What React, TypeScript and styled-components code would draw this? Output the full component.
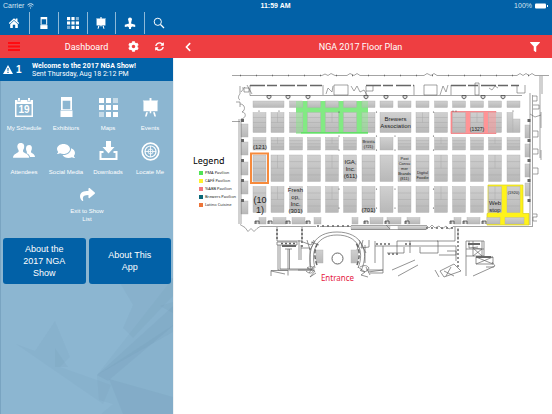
import React from "react";
import styled, { createGlobalStyle } from "styled-components";
import { FaChevronLeft, FaCog, FaComments, FaFilter, FaShare, FaSyncAlt } from "react-icons/fa";

const blue = "#0261a7";
const red = "#ee3e41";

const GlobalStyle = createGlobalStyle`
  * { box-sizing: border-box; }
  body { margin: 0; background: #fff; font-family: "Liberation Sans", Arial, sans-serif; }
  button { font: inherit; color: inherit; border: 0; padding: 0; background: none; cursor: pointer; }
  svg { display: block; }
`;

const Page = styled.div`
  min-height: 100vh;
  display: flex;
  flex-direction: column;
`;
const TopBar = styled.header`
  background: ${blue};
  color: #fff;
  padding-bottom: 1px;
`;
const Status = styled.div`
  display: grid;
  grid-template-columns: 1fr auto 1fr;
  height: 12px;
  padding: 0 4px 0 3px;
  align-items: center;
  font-size: 7px;
  line-height: 12px;
`;
const StatusSide = styled.div<{ $end?: boolean }>`
  display: flex;
  align-items: center;
  gap: 3px;
  color: #d5e5f1;
  justify-content: ${(p) => (p.$end ? "flex-end" : "flex-start")};
`;
const Clock = styled.time`
  font-weight: bold;
`;
const QuickNav = styled.nav`
  display: grid;
  grid-template-columns: repeat(6, 1fr);
  width: 173px;
  height: 22px;
`;
const QuickButton = styled.button`
  display: grid;
  place-items: center;
  & + & { border-left: 1px solid #8db9d8; }
`;
const Columns = styled.div`
  flex: 1;
  display: grid;
  grid-template-columns: 173px 1fr;
`;
const Sidebar = styled.aside`
  display: flex;
  flex-direction: column;
  background: #8cb6d1;
  border-left: 1px solid #79a4c1;
  color: #fff;
`;
const SideHeader = styled.div`
  display: grid;
  grid-template-columns: 28px 1fr 26px 27px;
  height: 23px;
  align-items: center;
  background: ${red};
  margin-left: -1px;
`;
const Title = styled.h1`
  margin: 0;
  font-family: Roboto, sans-serif;
  font-size: 9px;
  font-weight: normal;
  line-height: 12px;
  text-align: center;
`;
const SideTitle = styled(Title)`
  padding-left: 25px;
`;
const IconButton = styled.button`
  display: grid;
  place-items: center;
  height: 23px;
`;
const Alert = styled.section`
  display: flex;
  align-items: center;
  height: 23px;
  background: ${blue};
  margin-left: -1px;
  padding-left: 3px;
`;
const AlertCount = styled.div`
  display: flex;
  align-items: center;
  gap: 3px;
  width: 29px;
  font-size: 10px;
  font-weight: bold;
`;
const AlertText = styled.p`
  margin: 0;
  font-family: Roboto, sans-serif;
  font-size: 7px;
  line-height: 8px;
`;
const SideBody = styled.div`
  position: relative;
  flex: 1;
  padding: 10px 2px;
`;
const Facets = styled.svg`
  position: absolute;
  inset: auto 0 0 0;
  width: 100%;
  height: auto;
`;
const Tiles = styled.div`
  position: relative;
  display: grid;
  grid-template-columns: repeat(4, 1fr);
`;
const Tile = styled.button<{ $wide?: boolean }>`
  display: flex;
  flex-direction: column;
  align-items: center;
  justify-content: flex-start;
  height: 44px;
  padding-top: 4px;
  gap: ${(p) => (p.$wide ? "2px" : "5px")};
  grid-column: ${(p) => (p.$wide ? "1 / -1" : "auto")};
  font-size: 6px;
  line-height: 8px;
`;
const TileIcon = styled.span`
  display: grid;
  place-items: center;
  height: 24px;
`;
const TileLabel = styled.span`
  max-width: 42px;
`;
const Actions = styled.div`
  position: relative;
  display: grid;
  grid-template-columns: 1fr 1fr;
  gap: 3px;
  margin-top: 15px;
`;
const Action = styled.button`
  min-height: 46px;
  padding: 0 18px;
  border-radius: 3px;
  background: ${blue};
  font-size: 9px;
  line-height: 12px;
`;
const Main = styled.main`
  background: #fff;
  border-left: 1px solid #eef2f4;
`;
const MainHeader = styled.div`
  display: grid;
  grid-template-columns: 30px 1fr 34px;
  height: 23px;
  align-items: center;
  background: ${red};
  color: #fff;
  margin-left: -1px;
`;
const Plan = styled.div`
  display: grid;
  grid-template-columns: 58px 1fr;
  padding-top: 8px;
  font-family: "Noto Sans", sans-serif;
`;
const Legend = styled.section`
  padding: 88px 0 0 19px;
`;
const LegendTitle = styled.h2`
  margin: 0 0 1px;
  font-size: 9px;
  line-height: 14px;
  font-weight: normal;
  color: #000;
`;
const LegendList = styled.ul`
  margin: 0;
  padding: 0 0 0 6px;
  list-style: none;
`;
const LegendItem = styled.li<{ $color: string }>`
  display: flex;
  align-items: center;
  gap: 2px;
  height: 8px;
  font-size: 4px;
  line-height: 8px;
  white-space: nowrap;
  color: #222;
  &::before {
    content: "";
    flex: none;
    width: 4px;
    height: 4px;
    background: ${(p) => p.$color};
  }
`;
const Map = styled.svg`
  width: 100%;
  height: auto;
`;

const Home = () => (
  <svg width="12" height="12" viewBox="0 0 12 12" fill="#fff">
    <path d="M.8 6.100 6 1.200l1.800 1.600V1.500h1.700v2.900l1.700 1.700-.8.900L6 2.900 1.600 7z" />
    <path d="M2.200 7.200 6 3.800l3.800 3.400V11H7.200V7.800H4.800V11H2.200z" />
  </svg>
);
const Booth = ({ h }: { h: number }) => (
  <svg height={h} width={h * 0.65} viewBox="0 0 13 20" fill="#fff">
    <path fillRule="evenodd" d="M1 0h11v13H1zM2.700 3.800h7.600v8.400H2.700z" />
    <path d="M.5 13.500h12V20H.5z" />
  </svg>
);
const Dots = ({ s }: { s: number }) => (
  <svg width={s} height={s} viewBox="0 0 19 19" fill="#fff">
    {[0, 1, 2].map((r) =>
      [0, 1, 2].map((c) => {
        const faded = (r === 0 && c === 2) || (r === 2 && c === 0);
        return <rect key={`${r}${c}`} x={c * 7} y={r * 7} width="5" height="5" opacity={faded ? 0.5 : 1} />;
      })
    )}
  </svg>
);
const Easel = ({ s }: { s: number }) => (
  <svg width={s} height={s} viewBox="0 0 18 20" fill="#fff">
    <path d="M8 0h2v2.500h7v1h-.6V14H1.600V3.500H1v-1h7zM4.400 15h1.900l-1.400 4.600H3.200zM11.700 15h1.900l1.200 4.600h-1.700zM8.200 14h1.600v2H8.200z" />
  </svg>
);
const Speaker = () => (
  <svg width="12" height="13" viewBox="0 0 12 13" fill="#fff">
    <circle cx="6" cy="2.500" r="2" />
    <path d="M4.500 4h3l-.5 2.500 4.200 1.300V10l-3-.4-1.200 1V12H5v-1.400l-1.200-1-3 .4V7.800L5 6.500z" />
  </svg>
);
const Search = () => (
  <svg width="12" height="12" viewBox="0 0 12 12" fill="none" stroke="#fff">
    <circle cx="4.800" cy="4.800" r="3.600" />
    <path d="m7.500 7.500 3.500 3.500" strokeWidth="1.300" />
  </svg>
);
const Calendar = () => (
  <svg width="18" height="20" viewBox="0 0 18 20">
    <path fill="#fff" d="M0 3h3V1h2v2h8V1h2v2h3v17H0z" />
    <path fill="#8cb6d1" d="M1.500 7h15v11.500h-15z" />
    <path fill="none" stroke="#8cb6d1" strokeWidth=".6" d="M2.600 2.200v2.200h2.800V2.200M12.600 2.200v2.200h2.800V2.200" />
    <text x="9" y="16.400" textAnchor="middle" fontFamily="Liberation Sans" fontWeight="bold" fontSize="10" fill="#fff">19</text>
  </svg>
);
const People = () => (
  <svg width="22" height="16" viewBox="0 0 22 16" fill="#fff">
    <path d="M16 2c2.500 0 3.200 2 2.800 4-.2 1.300-.9 2-.8 3 .3 1.500 3.800 1.500 4 5h-5c-.3-2.200-1.800-3-3.700-3.800 1.200-.8 .6-1.300 0-2.700C12.600 5 13.300 2 16 2z" />
    <path d="M7.800 0c3 0 3.800 2.300 3.300 4.800-.3 1.500-1.200 2-1.100 3.500.2 2.200 6 2 6.200 6.500H0c.2-4.500 5.400-4.300 5.700-6.500.1-1.500-.9-2-1.200-3.500C4 2.300 4.900 0 7.800 0z" />
  </svg>
);
const Download = () => (
  <svg width="19" height="20" viewBox="0 0 19 20" fill="#fff">
    <path d="M7 0h5v6h3.500l-6 6.500-6-6.500H7z" />
    <path d="M.5 10h4v2h-2v5h14v-5h-2v-2h4v9H.5z" />
  </svg>
);
const Target = () => (
  <svg width="19" height="19" viewBox="0 0 19 19" fill="none" stroke="#fff">
    <circle cx="9.500" cy="9.500" r="8.300" strokeWidth="1.700" />
    <circle cx="9.500" cy="9.500" r="5.500" strokeWidth="1.200" />
    <circle cx="9.500" cy="9.500" r="2.500" strokeWidth=".8" />
    <path d="M9.500 4v11M4 9.500h11" strokeWidth=".8" />
  </svg>
);

const quick = [
  ["Home", <Home />],
  ["Exhibitors", <Booth h={12} />],
  ["Maps", <Dots s={12} />],
  ["Events", <Easel s={12} />],
  ["Speakers", <Speaker />],
  ["Search", <Search />],
] as const;

const tiles = [
  ["My Schedule", <Calendar />],
  ["Exhibitors", <Booth h={20} />],
  ["Maps", <Dots s={19} />],
  ["Events", <Easel s={19} />],
  ["Attendees", <People />],
  ["Social Media", <FaComments size={18} />],
  ["Downloads", <Download />],
  ["Locate Me", <Target />],
] as const;

const legend = [
  ["#50e356", "PMA Pavilion"],
  ["#fff22b", "CAFÉ Pavilion"],
  ["#f2767c", "%ABB Pavilion"],
  ["#0a6878", "Brewers Pavilion"],
  ["#ed7438", "Latino Cuisine"],
];

type Box = [number, number, number, number];
const column = (i: number) => Math.round((253 + 18.130 * i) * 2) / 2;
const booths: Box[] = [
  [253, 101, 31, 6.500],
  ...Array.from({ length: 13 }, (_, i): Box => [column(i + 2), 101, 13, 6.500]),
  ...Array.from({ length: 15 }, (_, i) => i)
    .filter((i) => i !== 7 && i !== 8 && i !== 14)
    .map((i): Box => [column(i), 112.500, 13, 20]),
  [380, 112.500, 31, 20],
  [507, 112.500, 6, 20], [513, 119, 7, 13.500],
  ...Array.from({ length: 15 }, (_, i): Box => [column(i), 137.500, 13, 12.500]),
  ...Array.from({ length: 15 }, (_, i): Box => [column(i), 155, 13, 26.500]),
  ...Array.from({ length: 15 }, (_, i): Box => [column(i), 186.500, 13, 26]),
  ...[[259, 7], [273, 13], [292, 13], [314, 7], [352, 6], [370, 13], [387, 14], [407, 13], [454, 7], [467, 13], [487, 13], [505, 19]]
    .map(([x, w]): Box => [x, 217.500, w, 6.500]),
  [351, 226.500, 39, 3], [398, 226.500, 29, 3],
  ...[124, 142, 162, 181, 201].map((y): Box => [241, y, 7, 13]),
  ...[125, 144, 164, 183].map((y): Box => [525, y, 5, 13]),
  [316, 250, 7, 13], [351, 250, 7, 13],
];
const plain = new Set([380]);

const labels: [number, number, number, string[]][] = [
  [260, 149, 6, ["(121)"]],
  [395.500, 121, 6, ["Brewers", "Association"]],
  [368.500, 143, 4, ["Brixsta", "(721)"]],
  [350.500, 164, 6, ["IGA,", "Inc.", "(611)"]],
  [404.500, 160, 4, ["Post", "Consu", "mer", "Brands", "(811)"]],
  [422.500, 174, 4, ["Digital", "Foodie"]],
  [477, 131, 5, ["(1327)"]],
  [260, 203, 9, ["(10", "1)"]],
  [295.500, 192, 6, ["Fresh", "op,", "Inc.", "(301)"]],
  [368.500, 212, 6, ["(701)"]],
  [495, 205, 6, ["Web", "stop"]],
  [513.500, 194, 4, ["(1920)"]],
];
const lineStep: Record<number, number> = { 4: 5, 5: 6, 6: 7, 9: 10 };

const FloorMap = () => (
  <Map viewBox="232 66 320 224" role="img" aria-label="Floor plan">
    <defs>
      <linearGradient id="booth" x2="0" y2="1">
        <stop stopColor="#d0d0d0" />
        <stop offset="1" stopColor="#b8b8b8" />
      </linearGradient>
    </defs>
    <path fill="#82ea83" d="M296 101h72v32.500h-72z" />
    <path fill="#ff9496" stroke="#ee7175" strokeWidth=".7" d="M451 111.500h45v22h-45z" />
    <path fill="#fff31a" stroke="#d9cf23" strokeWidth=".7" d="M488 185h35v28.500h6v11.500h-42v-11.500h1z" />
    {booths.map(([x, y, w, h], i) => (
      <g key={i}>
        <rect x={x} y={y} width={w} height={h} fill="url(#booth)" stroke="#b0b0b0" strokeWidth=".4" />
        {h > 10 && w > 10 && !plain.has(x) && (
          <path
            d={`M${x} ${y + h / 2}h${w}M${x} ${y + h / 4}h${w}M${x} ${y + (h * 3) / 4}h${w}${i % 3 ? "" : `M${x + w / 2} ${y}v${h / 2}`}`}
            stroke="#a4a4a4" strokeWidth=".4" fill="none"
          />
        )}
      </g>
    ))}
    <path fill="#82ea83" opacity=".45" d="M296 101h6v32h-6zM362 101h6v32h-6z" />
    <path fill="#ff9496" opacity=".5" d="M489 112h7v21h-7z" />
    <path fill="#63df68" d="M301 132h67v1.500h-67z" />
    <path fill="none" stroke="#f68a3c" strokeWidth="2" d="M251 153.500h17v29.500h-17z" />

    <g fill="none" stroke="#666" strokeWidth=".6">
      <path d="M232 75.500h90l3-1.500 3 1.500 3-2 4 2h12l3-2 4 2 3-2 3 2h64l3-2 4 2 3-2 3 2h80l3-2 3 2 3-2 3 2 3-2 3 2h14" />
      <path strokeWidth="1.500" strokeDasharray="1 15" d="M240 75.500h302" />
      <path d="M250 95.500h272M250 85v10.500M323 85v10M334 85h14v10h-14zM351 86l3 5 3-5 3 6 4-2 3 5M366 86v9M373 85v6h-7M414 85v10M424 85h13v10h-13zM440 95l3-9 3 6 2-7M451 85v10M475 83v12h4V83zM489 88l3 2 3-4 3 2M517 85v8h8v-8M326 94l2-6 4 4 1-6" />
      <path d="M240 86v8M241 92l4-5M242 88h7v4h-5v-3M247 85l5 9M236 102h4v5M240 94c-2 2-2 5 0 6M240 104c5 0 6 6 2 8 4 0 5 6-1 7M232 121.500h8" />
      <path d="M530 93v132M532.500 95v131M540 76v82M542 76v18M541 112v16M541 150v10M530 114l5 3 6-2M533 96h4v5h-4M533 105h6v4h-6M533 131h5v6h-5M533 149h5v5h-5M533 168h5v6h-5M533 214h4v3h-4v4h4" />
      <path d="M239 119v105M241 119v105" />
      <path d="M240 224.500l5 3 3 4 3-3 3 3 3-3 3-2h56M320 226.500h31M351 225.500h75M453 226.500h80M351 229.500h75M386 225l4 4M426 225l3 3 3-3 3 3 4-2 3 3 4-3 3 3 4-2" />
    </g>
    <g stroke="#666" strokeWidth="1.500" fill="none">
      <path strokeDasharray="15 2 10 3" d="M250 85.500h72M366 85.500h48M451 85.500h68" />
      <path strokeDasharray="2 3" d="M317 226h33M426 228h27" />
      <path strokeDasharray="3 17" strokeWidth="3" d="M242.500 119v100M529 119v90" />
    </g>
    <g fill="#ddd" stroke="#444" strokeWidth=".8">
      {[269, 288, 308, 366, 386, 405, 464, 483, 503].map((x) => <path key={x} d={`M${x - 2} 95.500h4v2l-2 1.500-2-1.500z`} />)}
      {[257, 270, 288, 308, 366, 387, 407, 452, 465, 484].map((x) => <path key={x} d={`M${x - 2} 224v-3h4v3M${x - 1} 221v3`} />)}
    </g>
    <g fill="#444">
      {[112, 136, 150, 189, 208].map((y) =>
        [339, 376.500, 395, 433.500].filter((x) => !(y === 112 && x === 395)).map((x) => <circle key={`${x}${y}`} cx={x} cy={y} r=".6" />)
      )}
      {[259, 279, 453, 456, 513].map((x) => <circle key={x} cx={x} cy="111" r=".6" />)}
    </g>

    <g fill="none" stroke="#666" strokeWidth=".7">
      <path d="M277 227v14h25v-14M278 245v25h34M280 245v24h33M277 242h20v3h-20zM299 240v20M301 245v15M288 249v20M289.500 249v20M285 249h7" />
      <path strokeWidth="1.600" strokeDasharray="2 2" d="M277 229v11M302 229v20M281 243.500h15" />
      <path d="M271 276v-5.500h17v5M271 271l14 3M298 270h15M303 242l8 3 3-5M301 248h9v18M307 240l3 10 5-9M307 268l8 3-5 6 6-4M311 242l8 3M314 266l-5 7M360 242l-3 8M359 240l7 13M363 240l-2 8 8-1v-7M365 245v18M358 267l7 5-4 3 7 2M366 270h17M368 272l15-2M366 267l4 8" />
      <path d="M311 269c-4-21 3-37 26-37 25 0 33 19 24 39M315 268c-5-19 3-33 22-33 21 0 28 16 21 33" />
      <path d="M317 265c-3-8-3-16 1-22M357 265c3-8 3-15-1-22" strokeWidth="1.500" strokeDasharray="4 2" />
      <path d="M360 267c4-2 7-2 9 1-2 4-5 5-9 2M307 268c3-2 6-2 7 1-1 5-5 5-8 2" />
      <circle cx="337.500" cy="258.500" r="5.500" strokeWidth="1" />
      <path d="M375 241v22M375 246h81v15M383 246v27h-13M387 253h17v-6M397 241v12M397 241h41v12h-18v-6M410 241v12M437 241h18v-14M439 255h17v-4h-9M392 270l23-10M398 276l20-11M435 270l4 7M440 271l14-7 7 7-17 6zM444 271l10 5M451 267l-5 9M466 241v35M458 228v12" />
      <path strokeDasharray="2 2" strokeWidth="1.400" d="M376 244h14M388 254h11M405 244h7M458 229v38" />
      <path d="M466 241h18v15h-18M466 249h18M473 241v15l9-7-9-1 9 8v-15M469 241v7l9-1M476 257h17v7h-17zM476 257l17 7M476 264l17-7M492 262l3 4-22 10M486 267h8" />
      <path strokeWidth="2" d="M468 244h12M476 257h15M282 246h14" />
    </g>
    {labels.map(([x, y, size, lines]) => (
      <text key={lines[0] + x} x={x} y={y} fontFamily="Liberation Sans" fontSize={size} textAnchor="middle" fill="#222">
        {lines.map((line, i) => <tspan key={line} x={x} dy={i ? lineStep[size] : 0}>{line}</tspan>)}
      </text>
    ))}
    <text x="337.500" y="281" textAnchor="middle" fontSize="8" fill="#e5173f">Entrance</text>
  </Map>
);

export default function App() {
  return (
    <Page>
      <GlobalStyle />
      <TopBar>
        <Status>
          <StatusSide>
            Carrier
            <svg width="7" height="6" viewBox="0 0 7 6" fill="none" stroke="#d5e5f1">
              <path d="M.5 2c2-1.700 4-1.700 6 0M1.700 3.500c1.200-1 2.400-1 3.600 0M3 5h1" />
            </svg>
          </StatusSide>
          <Clock>11:59 AM</Clock>
          <StatusSide $end>
            100%
            <svg width="13" height="6" viewBox="0 0 13 6" fill="#fff">
              <rect width="11" height="5" y=".5" rx="1" />
              <path d="M12 2h1v2h-1z" />
            </svg>
          </StatusSide>
        </Status>
        <QuickNav aria-label="Quick links">
          {quick.map(([name, icon]) => (
            <QuickButton key={name} aria-label={name}>{icon}</QuickButton>
          ))}
        </QuickNav>
      </TopBar>
      <Columns>
        <Sidebar>
          <SideHeader>
            <IconButton aria-label="Menu">
              <svg width="12" height="9" viewBox="0 0 12 9" stroke="#ff0b10" strokeWidth="2">
                <path d="M0 1h12M0 4.500h12M0 8h12" />
              </svg>
            </IconButton>
            <SideTitle>Dashboard</SideTitle>
            <IconButton aria-label="Settings"><FaCog size={11} /></IconButton>
            <IconButton aria-label="Refresh"><FaSyncAlt size={9} /></IconButton>
          </SideHeader>
          <Alert>
            <AlertCount>
              <svg width="10" height="9" viewBox="0 0 10 9">
                <path d="M5 0 10 9H0z" fill="#fff" />
                <path d="M4.400 3h1.200l-.2 3h-.8zM4.400 6.800h1.200V8H4.400z" fill={blue} />
              </svg>
              1
            </AlertCount>
            <AlertText>
              <strong>Welcome to the 2017 NGA Show!</strong>
              <br />
              Sent Thursday, Aug 18 2:12 PM
            </AlertText>
          </Alert>
          <SideBody>
            <Facets viewBox="0 0 172 136" fill="#587f9b">
              <path opacity=".07" d="M172 0 96 97 172 54z" />
              <path opacity=".09" d="M172 28 96 97l11 6 65-55z" />
              <path opacity=".07" d="M96 97l76-50v89h-72l12-10-14-4z" />
              <path opacity=".06" d="M34 73 54 43l15 36-10 10 51 18-8 19L15 66z" />
              <path opacity=".08" d="M116 0h56v18l-40 42-10-10 10-23z" />
              <path opacity=".08" d="M54 70l13 19-13 0zM159 28l13-4v11z" />
              <path opacity=".1" d="M108 101 172 119v17h-50z" />
            </Facets>
            <Tiles>
              {tiles.map(([name, icon]) => (
                <Tile key={name}>
                  <TileIcon>{icon}</TileIcon>
                  <TileLabel>{name}</TileLabel>
                </Tile>
              ))}
              <Tile $wide>
                <TileIcon><FaShare size={15} /></TileIcon>
                <TileLabel>Exit to Show List</TileLabel>
              </Tile>
            </Tiles>
            <Actions>
              <Action>About the 2017 NGA Show</Action>
              <Action>About This App</Action>
            </Actions>
          </SideBody>
        </Sidebar>
        <Main>
          <MainHeader>
            <IconButton aria-label="Back"><FaChevronLeft size={10} /></IconButton>
            <Title as="h2">NGA 2017 Floor Plan</Title>
            <IconButton aria-label="Filter"><FaFilter size={10} /></IconButton>
          </MainHeader>
          <Plan>
            <Legend>
              <LegendTitle>Legend</LegendTitle>
              <LegendList>
                {legend.map(([color, name]) => <LegendItem key={name} $color={color}>{name}</LegendItem>)}
              </LegendList>
            </Legend>
            <FloorMap />
          </Plan>
        </Main>
      </Columns>
    </Page>
  );
}
